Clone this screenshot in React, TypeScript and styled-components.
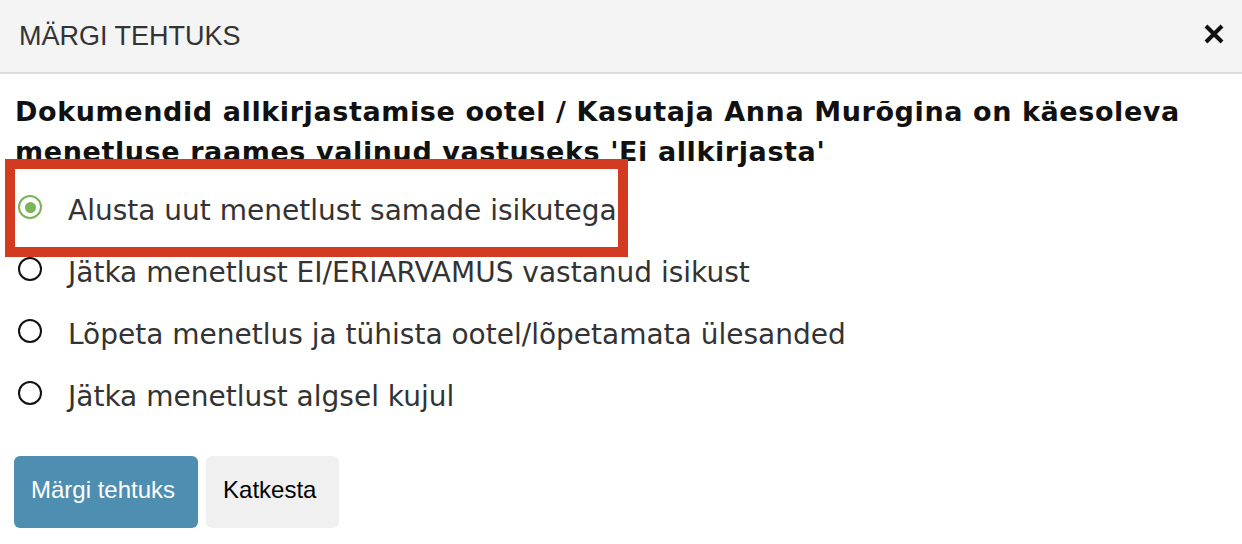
import React, { useState } from 'react';
import styled, { createGlobalStyle } from 'styled-components';

const GlobalStyle = createGlobalStyle`
  html, body {
    margin: 0;
    padding: 0;
    background: #ffffff;
  }
`;

const Dialog = styled.div`
  width: 1242px;
  min-height: 544px;
  background: #ffffff;
`;

const Header = styled.div`
  display: flex;
  align-items: center;
  justify-content: space-between;
  height: 72px;
  padding: 0 18px 0 19px;
  background: #f4f4f4;
  border-bottom: 2px solid #dcdcdc;
`;

const Title = styled.h1`
  margin: 0;
  font-family: 'Liberation Sans', Arial, sans-serif;
  font-weight: normal;
  font-size: 27px;
  color: #333333;
`;

const CloseButton = styled.button`
  display: flex;
  padding: 0;
  margin-top: -4px;
  border: 0;
  background: none;
  cursor: pointer;
`;

const Body = styled.div`
  padding: 18px 15px 0;
`;

const Question = styled.h2`
  margin: 0 0 7px;
  font-family: 'DejaVu Sans', Verdana, sans-serif;
  font-weight: bold;
  font-size: 27px;
  letter-spacing: 0.6px;
  line-height: 40px;
  color: #111111;
`;

const OptionList = styled.div`
  display: flex;
  flex-direction: column;
`;

const OptionRow = styled.label`
  position: relative;
  display: flex;
  align-items: center;
  gap: 26px;
  height: 62px;
  padding-left: 3px;
  font-family: 'DejaVu Sans', Verdana, sans-serif;
  font-size: 28px;
  color: #333333;
  cursor: pointer;
`;

const Radio = styled.span<{ $checked: boolean }>`
  box-sizing: border-box;
  flex: none;
  width: 24px;
  height: 24px;
  margin-top: -6px;
  border-radius: 50%;
  border: 2.5px solid ${(p) => (p.$checked ? '#79b45a' : '#111111')};
  display: flex;
  align-items: center;
  justify-content: center;

  &::after {
    content: '';
    width: 11px;
    height: 11px;
    border-radius: 50%;
    background: #79b45a;
    display: ${(p) => (p.$checked ? 'block' : 'none')};
  }
`;

const Highlight = styled.span`
  position: absolute;
  top: -20px;
  left: -10px;
  box-sizing: border-box;
  width: 623px;
  height: 98px;
  border: 10px solid #d23a22;
  pointer-events: none;
`;

const Actions = styled.div`
  display: flex;
  gap: 8px;
  margin-top: 29px;
  margin-left: -1px;
`;

const Button = styled.button<{ $primary?: boolean }>`
  height: 72px;
  padding: 0 23px 4px 17px;
  border: 0;
  border-radius: 6px;
  font-family: 'Liberation Sans', Arial, sans-serif;
  font-size: 24px;
  color: ${(p) => (p.$primary ? '#ffffff' : '#000000')};
  background: ${(p) => (p.$primary ? '#4d8eb1' : '#f0f0f0')};
  cursor: pointer;
`;

const options = [
  'Alusta uut menetlust samade isikutega',
  'Jätka menetlust EI/ERIARVAMUS vastanud isikust',
  'Lõpeta menetlus ja tühista ootel/lõpetamata ülesanded',
  'Jätka menetlust algsel kujul',
];

const CloseIcon: React.FC = () => (
  <svg width="20" height="20" viewBox="0 0 20 20">
    <path d="M2 2 L18 18 M18 2 L2 18" stroke="#111" strokeWidth="4" />
  </svg>
);

const App: React.FC = () => {
  const [selected, setSelected] = useState(0);

  return (
    <>
      <GlobalStyle />
      <Dialog>
        <Header>
          <Title>MÄRGI TEHTUKS</Title>
          <CloseButton aria-label="Sulge">
            <CloseIcon />
          </CloseButton>
        </Header>

        <Body>
          <Question>
            Dokumendid allkirjastamise ootel / Kasutaja Anna Murõgina on käesoleva menetluse raames valinud
            vastuseks 'Ei allkirjasta'
          </Question>

          <OptionList>
            {options.map((text, i) => (
              <OptionRow key={text} onClick={() => setSelected(i)}>
                <Radio $checked={selected === i} />
                {text}
                {i === 0 && <Highlight />}
              </OptionRow>
            ))}
          </OptionList>

          <Actions>
            <Button $primary>Märgi tehtuks</Button>
            <Button>Katkesta</Button>
          </Actions>
        </Body>
      </Dialog>
    </>
  );
};

export default App;
